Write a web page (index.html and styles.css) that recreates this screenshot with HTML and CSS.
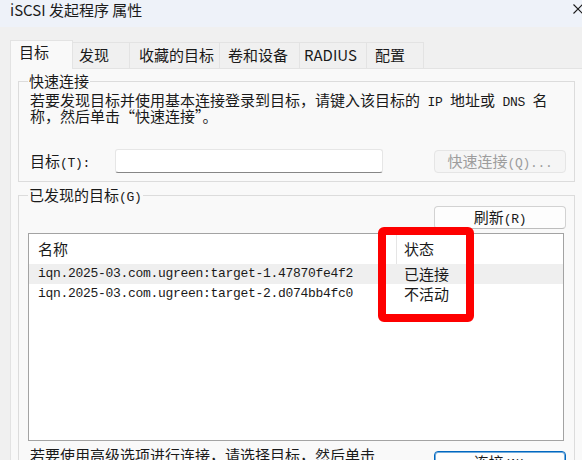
FILE: index.html
```html
<!DOCTYPE html>
<html lang="zh-CN">
<head>
<meta charset="utf-8">
<title>iSCSI 发起程序 属性</title>
<link rel="stylesheet" href="styles.css">
</head>
<body>
<div class="titlebar">
  <span class="title">iSCSI 发起程序 属性</span>
  <svg class="close" width="10" height="10" viewBox="0 0 10 10"><path d="M0.5 0.5 L9.5 9.5 M9.5 0.5 L0.5 9.5" stroke="#1b1b1b" stroke-width="1.1" fill="none"/></svg>
</div>
<div class="tabs">
  <div class="tab sel t1">目标</div>
  <div class="tab t2">发现</div>
  <div class="tab t3">收藏的目标</div>
  <div class="tab t4">卷和设备</div>
  <div class="tab t5">RADIUS</div>
  <div class="tab t6">配置</div>
</div>
<div class="panel">
  <fieldset class="group g1">
    <legend>快速连接</legend>
    <p class="desc">若要发现目标并使用基本连接登录到目标，请键入该目标的<span class="m"> IP </span>地址或<span class="m"> DNS </span>名<br>称，然后单击“快速连接”。</p>
    <div class="qrow">
      <span class="lbl">目标<span class="m">(T):</span></span>
      <div class="input"></div>
      <div class="btn disabled">快速连接<span class="m">(Q)...</span></div>
    </div>
  </fieldset>
  <fieldset class="group g2">
    <legend>已发现的目标<span class="m">(G)</span></legend>
    <div class="brow"><div class="btn">刷新<span class="m">(R)</span></div></div>
    <div class="list">
      <div class="lhead"><div class="c1">名称</div><div class="c2">状态</div></div>
      <div class="lrow hl"><div class="c1 mono">iqn.2025-03.com.ugreen:target-1.47870fe4f2</div><div class="c2">已连接</div></div>
      <div class="lrow"><div class="c1 mono">iqn.2025-03.com.ugreen:target-2.d074bb4fc0</div><div class="c2">不活动</div></div>
    </div>
    <div class="foot">
      <div class="ftext">若要使用高级选项进行连接，请选择目标，然后单击</div>
      <div class="btn def">连接<span class="m">(N)</span></div>
    </div>
  </fieldset>
</div>
<div class="mark"></div>
</body>
</html>
```
FILE: styles.css
```css
html, body {
  margin: 0;
  padding: 0;
}
body {
  position: relative;
  width: 582px;
  height: 460px;
  overflow: hidden;
  background: #f0f0f0;
  color: #1a1a1a;
  font-family: "Noto Sans CJK SC", "Noto Sans", sans-serif;
  font-size: 15px;
  line-height: 16px;
}
.m, .mono {
  font-family: "Liberation Mono", "Noto Sans CJK SC", monospace;
  font-size: 13px;
  letter-spacing: -0.3px;
}
.m {
  line-height: 8px;
}
.titlebar {
  height: 27px;
  background: #eef2f9;
  display: flex;
  justify-content: space-between;
  align-items: flex-start;
  padding-left: 10px;
}
.title {
  line-height: 17px;
  padding-top: 1px;
  color: #1b1b1b;
}
.close {
  margin-top: 4px;
  margin-right: -1px;
}
.tabs {
  margin-top: 13px;
  height: 28px;
  padding-left: 10px;
  display: flex;
  align-items: flex-end;
}
.tab {
  box-sizing: border-box;
  height: 26px;
  border-top: 1px solid #e3e3e3;
  border-right: 1px solid #e3e3e3;
  line-height: 20px;
  padding-top: 2px;
  background: #f0f0f0;
  white-space: nowrap;
}
.tab.sel {
  position: relative;
  z-index: 1;
  height: 29px;
  margin-bottom: -1px;
  border-left: 1px solid #e3e3e3;
  background: #f9f9f9;
  padding-top: 1px;
}
.t1 { width: 63px; padding-left: 8px; }
.t2 { width: 57px; padding-left: 6px; }
.t3 { width: 90px; padding-left: 9px; }
.t4 { width: 80px; padding-left: 8px; }
.t5 { width: 67px; padding-left: 4px; }
.t6 { width: 57px; padding-left: 8px; }
.panel {
  margin-left: 10px;
  width: 590px;
  height: 400px;
  box-sizing: border-box;
  border-top: 1px solid #e3e3e3;
  border-left: 1px solid #e3e3e3;
  background: #f9f9f9;
  padding-top: 4px;
  padding-left: 7px;
}
.group {
  box-sizing: border-box;
  width: 557px;
  margin: 0;
  border: 1px solid #dcdcdc;
  padding: 3px 8px 8px 11px;
  min-width: 0;
}
.group legend {
  margin-left: -2px;
  padding: 0 1px;
  line-height: 16px;
  height: 16px;
  white-space: nowrap;
}
.desc {
  margin: 0;
  line-height: 16px;
  white-space: nowrap;
}
.qrow {
  margin-top: 25px;
  height: 24px;
  display: flex;
  align-items: center;
}
.lbl {
  width: 85px;
  flex: none;
  line-height: 20px;
}
.input {
  box-sizing: border-box;
  width: 268px;
  height: 24px;
  background: #ffffff;
  border: 1px solid #e6e6e6;
  border-bottom: 1px solid #868686;
  border-radius: 3px;
}
.btn {
  box-sizing: border-box;
  width: 132px;
  height: 23px;
  margin-left: auto;
  background: #fdfdfd;
  border: 1px solid #d2d2d2;
  border-bottom-color: #bdbdbd;
  border-radius: 4px;
  text-align: center;
  line-height: 20px;
  white-space: nowrap;
}
.btn.disabled {
  background: #f5f5f5;
  border-color: #e5e5e5;
  color: #9d9d9d;
}
.btn.def {
  border: 1px solid #0067c0;
  box-shadow: inset 0 0 0 1px rgba(0, 103, 192, 0.55);
  margin-top: 4px;
}
.g2 {
  margin-top: 5px;
  height: 400px;
}
.brow {
  display: flex;
}
.list {
  box-sizing: border-box;
  width: 536px;
  height: 208px;
  margin-top: 4px;
  margin-left: -2px;
  background: #ffffff;
  border: 1px solid #a3a3a3;
}
.lhead, .lrow {
  display: flex;
  white-space: nowrap;
}
.lhead {
  height: 30px;
  line-height: 30px;
}
.lrow {
  height: 20px;
  line-height: 20px;
}
.lrow.hl {
  background: #efefef;
}
.c1 {
  box-sizing: border-box;
  width: 368px;
  flex: none;
  padding-left: 9px;
}
.lhead .c1 {
  border-right: 1px solid #e5e5e5;
}
.c2 {
  padding-left: 7px;
}
.foot {
  display: flex;
  align-items: flex-start;
  margin-top: 6px;
}
.ftext {
  line-height: 16px;
  white-space: nowrap;
}
.mark {
  position: absolute;
  left: 378px;
  top: 227px;
  width: 96px;
  height: 95px;
  box-sizing: border-box;
  border: 8px solid #fe0000;
  border-radius: 6px;
}
```
